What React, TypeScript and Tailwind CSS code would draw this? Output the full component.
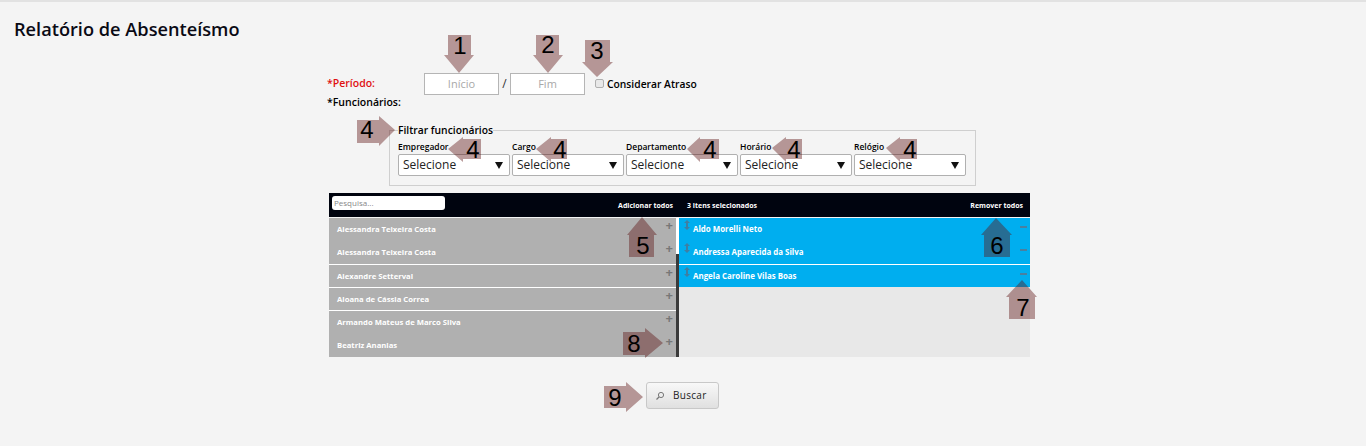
import React from "react";

const arrows: { pts: string; n: string; x: number; y: number }[] = [
  { pts: "448,35 471,35 471,55 474,55 459,73 444,55 448,55", n: "1", x: 460, y: 54 },
  { pts: "536,35 559,35 559,55 563,55 548,73 533,55 536,55", n: "2", x: 548, y: 53 },
  { pts: "585,40 610,40 610,62 613,62 597,77 582,62 585,62", n: "3", x: 597, y: 59 },
  { pts: "357,120 379,120 379,116 395,130 379,146 379,143 357,143", n: "4", x: 367, y: 138 },
  { pts: "448,149 463,137 463,139 481,139 481,159 463,159 463,162", n: "4", x: 473, y: 158 },
  { pts: "536,149 551,137 551,139 567,139 567,159 551,159 551,162", n: "4", x: 560, y: 158 },
  { pts: "687,149 700,137 700,139 719,139 719,159 700,159 700,162", n: "4", x: 710, y: 158 },
  { pts: "772,148 786,137 786,139 802,139 802,159 786,159 786,162", n: "4", x: 794, y: 158 },
  { pts: "886,148 900,137 900,139 917,139 917,159 900,159 900,162", n: "4", x: 910, y: 158 },
  { pts: "642,217 657,235 654,235 654,257 629,257 629,235 627,235", n: "5", x: 643, y: 254 },
  { pts: "996,218 1012,235 1010,235 1010,257 984,257 984,235 981,235", n: "6", x: 997, y: 254 },
  { pts: "1022,280 1037,297 1035,297 1035,319 1009,319 1009,297 1006,297", n: "7", x: 1023, y: 316 },
  { pts: "623,332 645,332 645,328 663,343 645,358 645,355 623,355", n: "8", x: 634, y: 352 },
  { pts: "604,386 626,386 626,382 643,397 626,412 626,408 604,408", n: "9", x: 615, y: 406 },
];

const filters = ["Empregador", "Cargo", "Departamento", "Horário", "Relógio"];

const left: [string, string][] = [
  ["Alessandra Teixeira Costa", "h-[23px]"],
  ["Alessandra Teixeira Costa", "h-[24px] border-b border-white"],
  ["Alexandre Setterval", "h-[23px] border-b border-white"],
  ["Aloana de Cássia Correa", "h-[23px] border-b border-white"],
  ["Armando Mateus de Marco Silva", "h-[23px]"],
  ["Beatriz Ananias", "h-[23px]"],
];

const right: [string, string][] = [
  ["Aldo Morelli Neto", "h-[23px]"],
  ["Andressa Aparecida da Silva", "h-[24px] border-b border-white"],
  ["Angela Caroline Vilas Boas", "h-[22px]"],
];

export default function App() {
  return (
    <div className="relative h-[446px] w-[1366px] overflow-hidden bg-[#f4f4f4] font-['Open_Sans',sans-serif] text-black">
      <div className="h-[2px] bg-[#e2e2e2]" />

      <h1 className="ml-[14px] mt-[17px] text-[18.2px] font-semibold leading-[20px] text-[#0a0a14]">
        Relatório de Absenteísmo
      </h1>

      <div className="ml-[327px] mt-[34px] flex h-[22px] items-center">
        <span className="w-[97px] text-[10.5px] font-semibold text-[#e01010]">*Período:</span>
        <div className="flex h-[22px] w-[75px] items-center justify-center border border-[#b5b5b5] bg-white text-[11px] text-[#a8a8a8]">
          Início
        </div>
        <span className="w-[11px] text-center text-[12px] text-[#333]">/</span>
        <div className="flex h-[22px] w-[75px] items-center justify-center border border-[#b5b5b5] bg-white text-[11px] text-[#a8a8a8]">
          Fim
        </div>
        <span className="ml-[10px] mb-[2px] h-[9px] w-[9px] rounded-[2px] border border-[#b0b0b0] bg-[#e8e8e8]" />
        <span className="ml-[3px] text-[10.3px] font-semibold leading-[22px]">Considerar Atraso</span>
      </div>

      <div className="ml-[327px] mt-[-1px] h-[16px] text-[10.5px] font-semibold leading-[16px]">*Funcionários:</div>

      <fieldset className="ml-[389px] mt-[13px] h-[63px] w-[587px] border border-[#cfcfcf] pl-[8px]">
        <legend className="text-[10.3px] font-semibold leading-[15px]">Filtrar funcionários</legend>
        <div className="flex gap-[2px] pt-[2px]">
          {filters.map((f) => (
            <div key={f} className="w-[112px]">
              <div className="h-[14px] text-[8.5px] font-semibold leading-[14px]">{f}</div>
              <div className="flex h-[22px] items-center justify-between rounded-[2px] border border-[#b0b0b0] bg-white pl-[4px] pr-[6px] text-[12px] text-[#222]">
                <span>Selecione</span>
                <svg width="8" height="7" viewBox="0 0 8 7" aria-hidden="true">
                  <polygon points="0,0 8,0 4,7" fill="#111" />
                </svg>
              </div>
            </div>
          ))}
        </div>
      </fieldset>

      <div className="ml-[329px] mt-[7px] w-[701px]">
        <div className="flex h-[24px] items-start bg-[#00040f] text-[7px] font-bold text-white">
          <div className="flex w-[350px] items-start justify-between pr-[6px]">
            <div className="ml-[3px] mt-[3px] flex h-[14px] w-[113px] items-center rounded-[3px] bg-white pl-[2px] text-[8px] font-normal text-[#888]">
              Pesquisa...
            </div>
            <span className="mt-[7px] leading-[12px]">Adicionar todos</span>
          </div>
          <div className="flex flex-1 justify-between pl-[8px] pr-[7px]">
            <span className="mt-[7px] leading-[12px]">3 itens selecionados</span>
            <span className="mt-[7px] leading-[12px]">Remover todos</span>
          </div>
        </div>
        <div className="mt-[1px] flex h-[139px]">
          <div className="w-[347px]">
            {left.map(([name, cls], i) => (
              <div
                key={i}
                className={`flex items-start justify-between bg-[#b0b0b0] pl-[8px] pr-[3px] text-[7.7px] font-bold text-white ${cls}`}
              >
                <span className="mt-[5px] leading-[13px]">{name}</span>
                <span className="text-[13px] font-bold leading-[15px] text-[#777]">+</span>
              </div>
            ))}
          </div>
          <div className="flex w-[3px] flex-col">
            <div className="h-[36px] bg-white" />
            <div className="flex-1 bg-[#3a3a3a]" />
          </div>
          <div className="flex-1 bg-[#e8e8e8]">
            {right.map(([name, cls], i) => (
              <div
                key={i}
                className={`flex items-start justify-between bg-[#00aeef] pr-[3px] text-[7.9px] font-bold text-white ${cls}`}
              >
                <div className="flex items-start">
                  <svg className="ml-[5px] mt-[2px]" width="6" height="10" viewBox="0 0 6 10" aria-hidden="true">
                    <path d="M3 0 L6 3 H4 V7 H6 L3 10 L0 7 H2 V3 H0 Z" fill="#3f7fa3" />
                  </svg>
                  <span className="ml-[3px] mt-[5px] leading-[13px]">{name}</span>
                </div>
                <span className="mt-[8px] h-[2px] w-[7px] bg-[#4a80a0]" />
              </div>
            ))}
          </div>
        </div>
      </div>

      <div className="ml-[646px] mt-[25px]">
        <div className="flex h-[27px] w-[73px] items-center rounded-[3px] border border-[#c8c8c8] bg-gradient-to-b from-[#f8f8f8] to-[#e0e0e0] pl-[8px] text-[10px] text-[#222]">
          <svg width="10" height="10" viewBox="0 0 10 10" aria-hidden="true">
            <circle cx="6" cy="4" r="2.6" fill="none" stroke="#777" strokeWidth="1" />
            <path d="M4 6 L1.5 8.5" stroke="#777" strokeWidth="1.2" />
          </svg>
          <span className="ml-[8px] tracking-[0.3px]">Buscar</span>
        </div>
      </div>

      <svg className="pointer-events-none absolute left-0 top-0" width="1366" height="446" aria-hidden="false">
        {arrows.map((a, i) => (
          <g key={i}>
            <polygon points={a.pts} fill="#5c1414" fillOpacity="0.42" />
            <text x={a.x} y={a.y} textAnchor="middle" fontFamily="'Liberation Sans', sans-serif" fontSize="24" fill="#000">
              {a.n}
            </text>
          </g>
        ))}
      </svg>
    </div>
  );
}
